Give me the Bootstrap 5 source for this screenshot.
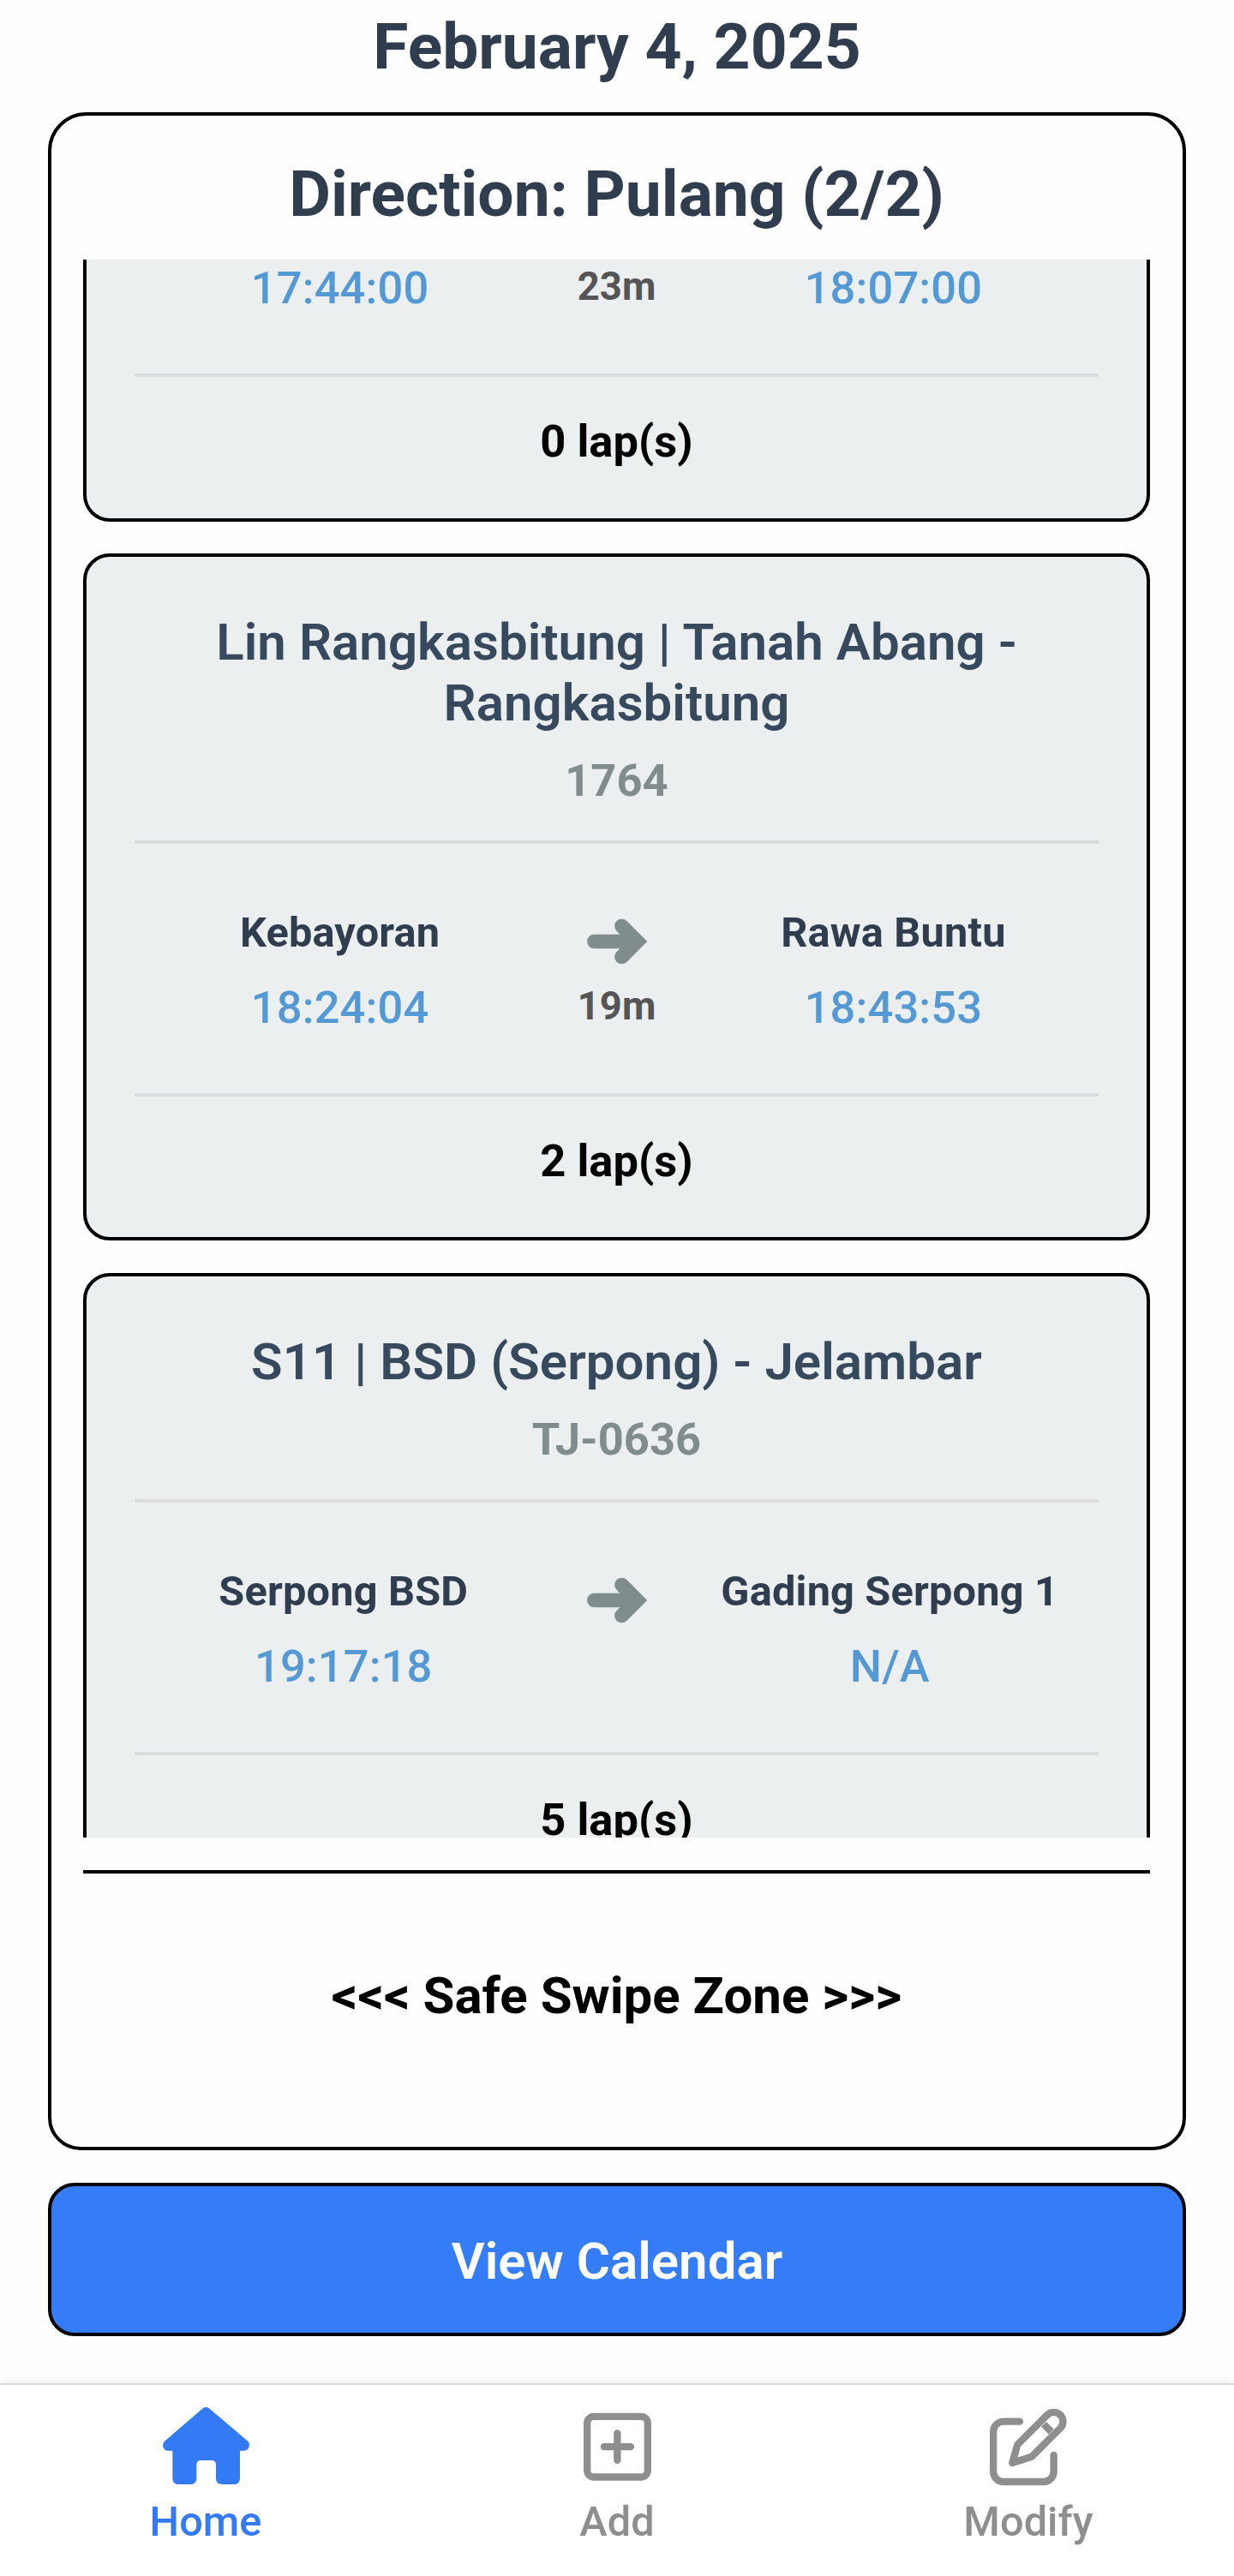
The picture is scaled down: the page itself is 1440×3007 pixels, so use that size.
<!DOCTYPE html>
<html lang="en">
<head>
<meta charset="utf-8">
<meta name="viewport" content="width=device-width, initial-scale=1">
<title>Trips</title>
<link href="https://cdn.jsdelivr.net/npm/bootstrap@5.3.0/dist/css/bootstrap.min.css" rel="stylesheet">
<style>
  body { font-family: Roboto, "Liberation Sans", sans-serif; background: #fefefe; color: #000; }
  .screen { height: 3007px; }
  .page-title { font-size: 75px; line-height: 88px; font-weight: 700; color: #2f3d4f; }
  .date-head { padding-top: 10px; margin-bottom: 33px; }
  .day-panel { margin: 0 56px; height: 2378.5px; border: 4px solid #000; border-radius: 45px 45px 38px 38px; padding: 47.4px 38px 0 37px; background: #fefefe; }
  .trip-list { height: 1842px; margin-top: 32.6px; gap: 38px; }
  .trip { border: 4px solid #000; border-radius: 31px; background: #ebeff0; padding: 64px 56px 58px; }
  .trip-cut { border-top: 0; border-top-left-radius: 0; border-top-right-radius: 0; padding-top: 2px; padding-bottom: 59px; margin-bottom: -1px; }
  .line-name { font-size: 60px; line-height: 71px; font-weight: 600; letter-spacing: .05px; color: #37495d; }
  .fleet-no { font-size: 52.5px; line-height: 62px; font-weight: 700; color: #818d8c; margin-top: 24px; }
  .rule { height: 4px; background: #dbdddd; }
  .route { padding: 75px 0 69px; }
  .route-cut { padding-top: 0; }
  .fleet-no + .rule { margin-top: 39px; }
  .stop { flex: 1 1 0; min-width: 0; }
  .stop-name { font-size: 48.75px; line-height: 57px; font-weight: 700; letter-spacing: .15px; color: #2f3d4f; margin-bottom: 28px; white-space: nowrap; }
  .stop-time { font-size: 52.5px; line-height: 62px; font-weight: 550; letter-spacing: .1px; color: #5498d4; }
  .hop { padding: 0 37.5px; }
  .duration { font-size: 45.5px; line-height: 54px; font-weight: 700; color: #555; margin-top: 10px; }
  .route-cut .duration { margin-top: 3px; }
  .laps { font-size: 52.5px; line-height: 62px; font-weight: 700; margin-top: 44px; }
  .swipe-zone { margin-top: 38px; border-top: 4px solid #000; height: 322px; padding-bottom: 31px; font-size: 60px; line-height: 70px; font-weight: 700; }
  .btn-calendar { margin: 38px 56px 0; height: 179px; border: 4px solid #000; border-radius: 31px; background: #347cf8; color: #fff; font-size: 60px; line-height: 70px; font-weight: 600; padding: 6px 0 0; }
  .btn-calendar:hover { background: #2b6fe4; color: #fff; border-color: #000; }
  .tabs { height: 225px; border-top: 2px solid #d8d8d8; box-shadow: 0 -2px 12px rgba(0,0,0,.07); background: #fff; padding-top: 21px; }
  .tab-link { flex: 1 1 0; color: #8e8e8e; text-decoration: none; font-size: 48.75px; line-height: 57px; font-weight: 500; gap: 10px; }
  .tab-link.active { color: #347af5; }
</style>
</head>
<body>
<div class="screen d-flex flex-column overflow-hidden">
  <h1 class="page-title date-head text-center">February 4, 2025</h1>

  <main class="day-panel d-flex flex-column flex-shrink-0">
    <h2 class="page-title text-center mb-0">Direction: Pulang (2/2)</h2>

    <div class="trip-list d-flex flex-column overflow-hidden flex-shrink-0">
      <article class="trip trip-cut flex-shrink-0 text-center">
        <div class="route route-cut d-flex align-items-start">
          <div class="stop"><div class="stop-time">17:44:00</div></div>
          <div class="hop d-flex flex-column align-items-center"><div class="duration">23m</div></div>
          <div class="stop"><div class="stop-time">18:07:00</div></div>
        </div>
        <div class="rule"></div>
        <div class="laps">0 lap(s)</div>
      </article>

      <article class="trip flex-shrink-0 text-center">
        <div class="line-name">Lin Rangkasbitung | Tanah Abang - Rangkasbitung</div>
        <div class="fleet-no">1764</div>
        <div class="rule"></div>
        <div class="route d-flex align-items-start">
          <div class="stop"><div class="stop-name">Kebayoran</div><div class="stop-time">18:24:04</div></div>
          <div class="hop d-flex flex-column align-items-center">
            <svg width="75" height="78" viewBox="127.5 61 225 234" fill="none" stroke="#818d8c" stroke-width="50" stroke-linecap="round"><path d="M162 178H300M258 124L312 178L258 232"/><path d="M262 140L300 178L262 216Z" fill="#818d8c" stroke="none"/></svg>
            <div class="duration">19m</div>
          </div>
          <div class="stop"><div class="stop-name">Rawa Buntu</div><div class="stop-time">18:43:53</div></div>
        </div>
        <div class="rule"></div>
        <div class="laps">2 lap(s)</div>
      </article>

      <article class="trip flex-shrink-0 text-center">
        <div class="line-name">S11 | BSD (Serpong) - Jelambar</div>
        <div class="fleet-no">TJ-0636</div>
        <div class="rule"></div>
        <div class="route d-flex align-items-start">
          <div class="stop"><div class="stop-name">Serpong BSD</div><div class="stop-time">19:17:18</div></div>
          <div class="hop d-flex flex-column align-items-center">
            <svg width="75" height="78" viewBox="127.5 61 225 234" fill="none" stroke="#818d8c" stroke-width="50" stroke-linecap="round"><path d="M162 178H300M258 124L312 178L258 232"/><path d="M262 140L300 178L262 216Z" fill="#818d8c" stroke="none"/></svg>
          </div>
          <div class="stop"><div class="stop-name">Gading Serpong 1</div><div class="stop-time">N/A</div></div>
        </div>
        <div class="rule"></div>
        <div class="laps">5 lap(s)</div>
      </article>
    </div>

    <div class="swipe-zone d-flex align-items-center justify-content-center flex-shrink-0">&lt;&lt;&lt; Safe Swipe Zone &gt;&gt;&gt;</div>
  </main>

  <button type="button" class="btn btn-calendar flex-shrink-0">View Calendar</button>

  <nav class="tabs d-flex mt-auto flex-shrink-0">
    <a href="#" class="tab-link active d-flex flex-column align-items-center">
      <svg width="104" height="100" viewBox="84 75 312 300" fill="currentColor"><path d="M230 94Q241 86 252 94L388 209Q393 214 393 223Q391 242 374 242H360V338Q360 360 338 360H298Q276 360 276 338V291Q276 276 261 276H223Q208 276 208 291V338Q208 360 186 360H146Q124 360 124 338V242H109Q92 242 90 224Q90 215 96 209Z"/></svg>
      <span>Home</span>
    </a>
    <a href="#" class="tab-link d-flex flex-column align-items-center">
      <svg width="104" height="100" viewBox="84 75 312 300" fill="none" stroke="currentColor" stroke-width="25" stroke-linecap="round"><rect x="135.5" y="122.5" width="212" height="212" rx="23"/><path d="M194.500 228.500H288M241 181.500V275.500"/></svg>
      <span>Add</span>
    </a>
    <a href="#" class="tab-link d-flex flex-column align-items-center">
      <svg width="104" height="100" viewBox="114 75 312 300" fill="none" stroke="currentColor" stroke-width="25" stroke-linecap="round" stroke-linejoin="round"><path d="M240 140H183A35.500 35.500 0 0 0 147.500 175.500V315.500A35.500 35.500 0 0 0 183 351H323.500A35.500 35.500 0 0 0 359 315.500V258"/><path d="M336 117A32.500 32.500 0 0 1 382 163L284 261Q281 264 277 265L214 285L230 228Q231 222 235 218Z"/><path stroke-linecap="butt" d="M324 149.500L350 175.500"/></svg>
      <span>Modify</span>
    </a>
  </nav>
</div>
<script src="https://cdn.jsdelivr.net/npm/bootstrap@5.3.0/dist/js/bootstrap.bundle.min.js"></script>
</body>
</html>
